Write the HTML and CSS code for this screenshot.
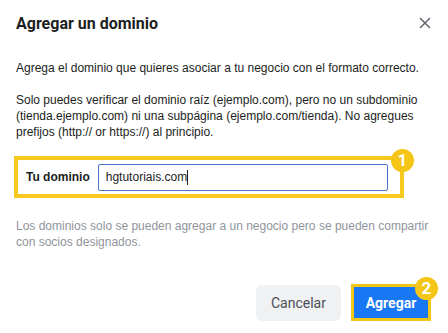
FILE: index.html
```html
<!DOCTYPE html>
<html lang="es">
<head>
<meta charset="utf-8">
<link rel="stylesheet" href="styles.css">
</head>
<body>
<div class="dialog">
  <div class="header">
    <h1 class="title">Agregar un dominio</h1>
    <svg class="close" width="12" height="12" viewBox="0 0 12 12"><path d="M1 1L11 11M11 1L1 11" stroke="#606770" stroke-width="1.5" fill="none"/></svg>
  </div>
  <div class="content">
    <p class="text">Agrega el dominio que quieres asociar a tu negocio con el formato correcto.</p>
    <p class="text">Solo puedes verificar el dominio raíz (ejemplo.com), pero no un subdominio (tienda.ejemplo.com) ni una subpágina (ejemplo.com/tienda). No agregues prefijos (http:// or https://) al principio.</p>
    <div class="field">
      <label class="label">Tu dominio</label>
      <div class="input">hgtutoriais.com<span class="caret"></span></div>
      <span class="badge badge-1">1</span>
    </div>
    <p class="note">Los dominios solo se pueden agregar a un negocio pero se pueden compartir con socios designados.</p>
  </div>
  <div class="footer">
    <button class="btn btn-cancel">Cancelar</button>
    <div class="hl">
      <button class="btn btn-primary">Agregar</button>
      <span class="badge badge-2">2</span>
    </div>
  </div>
</div>
</body>
</html>
```
FILE: styles.css
```css
html, body { margin: 0; padding: 0; background: #fff; }
body { font-family: "Liberation Sans", Arial, sans-serif; color: #1c1e21; }
.dialog { width: 448px; height: 333px; box-sizing: border-box; padding: 0 16px; }
.header { display: flex; align-items: center; justify-content: space-between; height: 46px; }
.title { margin: 0; font-family: Roboto, "Liberation Sans", sans-serif; font-size: 16px; font-weight: 700; color: #1c1e21; }
.close { margin-right: 1px; }
.content { padding-top: 14px; }
.text { margin: 0 0 16px; font-size: 12px; line-height: 16px; color: #1c1e21; }
.field { position: relative; display: flex; align-items: center; gap: 8px; margin: 0 -2px; box-sizing: border-box; width: 390px; height: 42px; padding: 0 12px 0 8px; border: 4px solid #f7c81e; }
.label { font-size: 12px; font-weight: 700; color: #1c1e21; }
.input { flex: 1; height: 27px; box-sizing: border-box; border: 1px solid #4a74c9; border-radius: 2px; padding: 0 7px; font-size: 12px; display: flex; align-items: center; }
.caret { display: inline-block; width: 1px; height: 15px; background: #1c1e21; }
.badge { position: absolute; width: 23px; height: 23px; border-radius: 50%; background: #f5c518; color: #fff; font-family: Roboto, "Liberation Sans", sans-serif; font-weight: 700; font-size: 17px; line-height: 23px; text-align: center; }
.badge-1 { right: -14px; top: -11px; }
.note { margin: 20px 0 0; font-size: 12px; line-height: 16px; color: #90949c; }
.footer { display: flex; justify-content: flex-end; align-items: center; gap: 10px; margin-top: 34px; padding-right: 1px; }
.btn { font-family: Roboto, "Liberation Sans", sans-serif; font-size: 14px; border: 0; border-radius: 6px; height: 36px; padding: 0; cursor: pointer; }
.btn-cancel { background: #f0f1f3; color: #4b4f56; width: 85px; }
.hl { position: relative; border: 3px solid #f5c518; }
.btn-primary { display: block; background: #1877f2; color: #fff; font-weight: 700; width: 74px; height: 31px; border-radius: 0; }
.badge-2 { right: -10px; top: -10px; }
```
